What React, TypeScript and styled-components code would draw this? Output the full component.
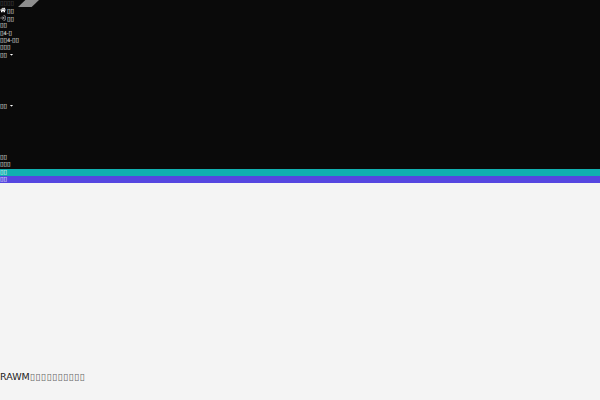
import React from "react";
import styled, { createGlobalStyle } from "styled-components";
import { FaHome, FaCaretDown } from "react-icons/fa";
import { FiLogIn } from "react-icons/fi";

const Global = createGlobalStyle`
  html, body { margin: 0; padding: 0; background: #f4f4f4; }
  body { font-family: "DejaVu Sans", sans-serif; }
`;

const Page = styled.div`
  width: 600px;
  height: 400px;
  display: flex;
  flex-direction: column;
  overflow: hidden;
`;

const Nav = styled.nav`
  height: 183px;
  flex: none;
  background: #0a0a0a;
  color: #fff;
  display: flex;
  flex-direction: column;
  font-size: 6.4px;
  position: relative;
  overflow: hidden;
`;

const Logo = styled.div`
  position: absolute;
  left: 18px;
  top: 0;
  width: 21px;
  height: 7px;
  background: #8e8e8e;
  clip-path: polygon(35% 0, 100% 0, 65% 100%, 0 100%);
`;

const Row = styled.div<{ $top?: number; $bg?: string; $dim?: boolean }>`
  height: 7.4px;
  line-height: 7px;
  flex: none;
  margin-top: ${(p) => p.$top ?? 0}px;
  background: ${(p) => p.$bg ?? "transparent"};
  color: ${(p) => (p.$dim ? "#555" : "#fff")};
  white-space: nowrap;
  overflow: hidden;
  svg {
    vertical-align: -0.5px;
  }
`;

const IconSlot = styled.span`
  display: inline-block;
  width: 7px;
  height: 7px;
  line-height: 7px;
`;

const Digit = styled.span`
  font-size: 5px;
`;

const Main = styled.main`
  flex: 1;
  display: flex;
  align-items: flex-end;
  padding-bottom: 16px;
`;

const Note = styled.p`
  margin: 0;
  font-size: 9.5px;
  line-height: 14px;
  color: #222;
`;

const Boxes = styled.span`
  letter-spacing: 0.3px;
  color: #666;
`;

export default function App() {
  return (
    <Page>
      <Global />
      <Nav>
        <Logo />
        <Row $dim>▯▯▯▯</Row>
        <Row><IconSlot><FaHome size={6} /></IconSlot>▯▯</Row>
        <Row><IconSlot><FiLogIn size={6} /></IconSlot>▯▯</Row>
        <Row>▯▯</Row>
        <Row>▯<Digit>4-</Digit>▯</Row>
        <Row>▯▯<Digit>4-</Digit>▯▯</Row>
        <Row>▯▯▯</Row>
        <Row>▯▯ <FaCaretDown size={5} /></Row>
        <Row $top={43.7}>▯▯ <FaCaretDown size={5} /></Row>
        <Row $top={43.7}>▯▯</Row>
        <Row>▯▯▯</Row>
        <Row $bg="#10b0b0">▯▯</Row>
        <Row $bg="#5546e0">▯▯</Row>
      </Nav>
      <Main>
        <Note>RAWM<Boxes>▯▯▯▯▯▯▯▯▯▯</Boxes></Note>
      </Main>
    </Page>
  );
}
